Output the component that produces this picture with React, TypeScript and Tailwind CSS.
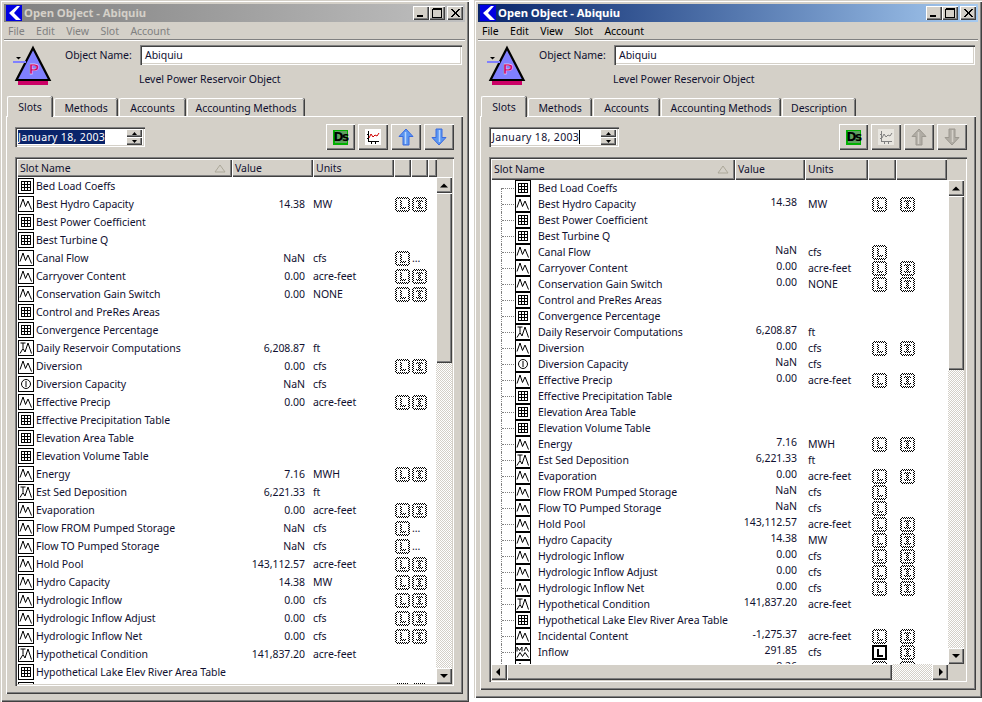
import type { ReactNode } from 'react';

const RAISED =
  'bg-[#d4d0c8] shadow-[inset_1px_1px_0_#ffffff,inset_-1px_-1px_0_#404040,inset_-2px_-2px_0_#808080]';
const SUNKEN =
  'shadow-[inset_1px_1px_0_#808080,inset_2px_2px_0_#404040,inset_-1px_-1px_0_#ffffff,inset_-2px_-2px_0_#d4d0c8]';
const DITHER =
  'bg-[repeating-conic-gradient(#d4d0c8_0_25%,#ffffff_0_50%)] bg-[length:2px_2px]';

type IconKind = 'table' | 'series' | 'peak' | 'multi' | 'scalar';
type Row = [name: string, value?: string, units?: string, kind?: IconKind, flags?: string];

const LEFT_ROWS: Row[] = [
  ['Bed Load Coeffs', '', '', 'table', ''],
  ['Best Hydro Capacity', '14.38', 'MW', 'series', 'LX'],
  ['Best Power Coefficient', '', '', 'table', ''],
  ['Best Turbine Q', '', '', 'table', ''],
  ['Canal Flow', 'NaN', 'cfs', 'series', 'L.'],
  ['Carryover Content', '0.00', 'acre-feet', 'series', 'LX'],
  ['Conservation Gain Switch', '0.00', 'NONE', 'series', 'LX'],
  ['Control and PreRes Areas', '', '', 'table', ''],
  ['Convergence Percentage', '', '', 'table', ''],
  ['Daily Reservoir Computations', '6,208.87', 'ft', 'peak', ''],
  ['Diversion', '0.00', 'cfs', 'series', 'LX'],
  ['Diversion Capacity', 'NaN', 'cfs', 'scalar', ''],
  ['Effective Precip', '0.00', 'acre-feet', 'series', 'LX'],
  ['Effective Precipitation Table', '', '', 'table', ''],
  ['Elevation Area Table', '', '', 'table', ''],
  ['Elevation Volume Table', '', '', 'table', ''],
  ['Energy', '7.16', 'MWH', 'series', 'LX'],
  ['Est Sed Deposition', '6,221.33', 'ft', 'peak', ''],
  ['Evaporation', '0.00', 'acre-feet', 'series', 'LX'],
  ['Flow FROM Pumped Storage', 'NaN', 'cfs', 'series', 'L.'],
  ['Flow TO Pumped Storage', 'NaN', 'cfs', 'series', 'L.'],
  ['Hold Pool', '143,112.57', 'acre-feet', 'series', 'LX'],
  ['Hydro Capacity', '14.38', 'MW', 'series', 'LX'],
  ['Hydrologic Inflow', '0.00', 'cfs', 'series', 'LX'],
  ['Hydrologic Inflow Adjust', '0.00', 'cfs', 'series', 'LX'],
  ['Hydrologic Inflow Net', '0.00', 'cfs', 'series', 'LX'],
  ['Hypothetical Condition', '141,837.20', 'acre-feet', 'peak', ''],
  ['Hypothetical Lake Elev River Area Table', '', '', 'table', ''],
  ['Incidental Content', '-1,275.37', 'acre-feet', 'series', 'LX'],
];

const RIGHT_ROWS: Row[] = [
  ['Bed Load Coeffs', '', '', 'table', ''],
  ['Best Hydro Capacity', '14.38', 'MW', 'series', 'LX'],
  ['Best Power Coefficient', '', '', 'table', ''],
  ['Best Turbine Q', '', '', 'table', ''],
  ['Canal Flow', 'NaN', 'cfs', 'series', 'L'],
  ['Carryover Content', '0.00', 'acre-feet', 'series', 'LX'],
  ['Conservation Gain Switch', '0.00', 'NONE', 'series', 'LX'],
  ['Control and PreRes Areas', '', '', 'table', ''],
  ['Convergence Percentage', '', '', 'table', ''],
  ['Daily Reservoir Computations', '6,208.87', 'ft', 'peak', ''],
  ['Diversion', '0.00', 'cfs', 'series', 'LX'],
  ['Diversion Capacity', 'NaN', 'cfs', 'scalar', ''],
  ['Effective Precip', '0.00', 'acre-feet', 'series', 'LX'],
  ['Effective Precipitation Table', '', '', 'table', ''],
  ['Elevation Area Table', '', '', 'table', ''],
  ['Elevation Volume Table', '', '', 'table', ''],
  ['Energy', '7.16', 'MWH', 'series', 'LX'],
  ['Est Sed Deposition', '6,221.33', 'ft', 'peak', ''],
  ['Evaporation', '0.00', 'acre-feet', 'series', 'LX'],
  ['Flow FROM Pumped Storage', 'NaN', 'cfs', 'series', 'L'],
  ['Flow TO Pumped Storage', 'NaN', 'cfs', 'series', 'L'],
  ['Hold Pool', '143,112.57', 'acre-feet', 'series', 'LX'],
  ['Hydro Capacity', '14.38', 'MW', 'series', 'LX'],
  ['Hydrologic Inflow', '0.00', 'cfs', 'series', 'LX'],
  ['Hydrologic Inflow Adjust', '0.00', 'cfs', 'series', 'LX'],
  ['Hydrologic Inflow Net', '0.00', 'cfs', 'series', 'LX'],
  ['Hypothetical Condition', '141,837.20', 'acre-feet', 'peak', ''],
  ['Hypothetical Lake Elev River Area Table', '', '', 'table', ''],
  ['Incidental Content', '-1,275.37', 'acre-feet', 'series', 'LX'],
  ['Inflow', '291.85', 'cfs', 'multi', 'BX'],
  ['Inflow S', '8.26', '', 'series', 'LX'],
];

function SlotIcon({ kind }: { kind: IconKind }) {
  return (
    <svg width="16" height="16" viewBox="0 0 16 16" shapeRendering="crispEdges" className="shrink-0">
      <rect x="0.5" y="0.5" width="15" height="15" fill="#fff" stroke="#000" strokeWidth="1.4" />
      {kind === 'table' && (
        <path d="M3.500 3.500h9v9h-9zM3.500 6.500h9M3.500 9.500h9M6.500 3.500v9M9.500 3.500v9" fill="none" stroke="#000" />
      )}
      {kind === 'series' && (
        <path d="M2 11.500 L5 3 L7.500 10.500 L10 5 L13.500 13.500" fill="none" stroke="#000" strokeWidth="1" shapeRendering="auto" />
      )}
      {kind === 'peak' && (
        <path d="M2.500 3h5M5 3v5M2 13.500L5 8.500L7 12L10 3L13.500 13.500" fill="none" stroke="#000" strokeWidth="1" shapeRendering="auto" />
      )}
      {kind === 'multi' && (
        <path d="M2 7.500V3L4.500 6.500L7 3V7.500M9 7L11 3L13.500 7.500M2 13.500L5 8.500L7.500 12.500L10 8.500L13.500 13.500" fill="none" stroke="#000" strokeWidth="1" shapeRendering="auto" />
      )}
      {kind === 'scalar' && (
        <g fill="none" stroke="#000" shapeRendering="auto">
          <circle cx="8" cy="8" r="4.5" />
          <path d="M8 5v6" />
        </g>
      )}
    </svg>
  );
}

// checker-dithered frame with a dithered letter inside, as the disabled log flags are drawn
function ditherPath(letter: 'L' | 'X') {
  const cells: string[] = [];
  const on = (x: number, y: number) => {
    const ring = x < 2 || y < 2 || x > 12 || y > 12;
    const corner = (x < 1 || x > 13) && (y < 1 || y > 13);
    const glyph =
      letter === 'L'
        ? (x >= 5 && x <= 6 && y >= 3 && y <= 11) || (y >= 10 && y <= 11 && x >= 5 && x <= 10)
        : (y >= 3 && y <= 4 && x >= 4 && x <= 10) ||
          (y >= 10 && y <= 11 && x >= 4 && x <= 10) ||
          (x >= 6 && x <= 8 && y >= 3 && y <= 11);
    return (ring && !corner) || glyph;
  };
  for (let y = 0; y < 15; y++) {
    for (let x = 0; x < 15; x++) {
      if ((x + y) % 2 === 0 && on(x, y)) cells.push(`M${x} ${y}h1v1h-1z`);
    }
  }
  return cells.join('');
}

function Flag({ letter }: { letter: 'L' | 'X' }) {
  return (
    <svg width="15" height="15" viewBox="0 0 15 15" shapeRendering="crispEdges" className="shrink-0">
      <path d={ditherPath(letter)} fill="#000" />
    </svg>
  );
}

function BoldFlag() {
  return (
    <svg width="15" height="15" viewBox="0 0 15 15" shapeRendering="crispEdges" className="shrink-0">
      <rect x="1" y="1" width="13" height="13" fill="#fff" stroke="#000" strokeWidth="2" />
      <path d="M5 3.500h2v6h4v2H5z" fill="#000" />
    </svg>
  );
}

function ObjectIcon() {
  return (
    <svg width="44" height="46" viewBox="0 0 44 46" className="shrink-0">
      <rect x="6" y="38" width="30" height="5" fill="#cc0066" />
      <path d="M21 6 L37.500 38 H4.500 Z" fill="#8080ff" stroke="#000" strokeWidth="2.2" strokeLinejoin="miter" />
      <rect x="1" y="19" width="13" height="2" fill="#8080ff" />
      <path d="M4 15h5l-2.500 2.500z" fill="#000" />
      <text x="22" y="32" textAnchor="middle" fontSize="15" fontWeight="700" fill="#cc0066" stroke="#fff" strokeWidth="0.3" fontFamily="Liberation Sans, sans-serif">
        P
      </text>
    </svg>
  );
}

function AppLogo() {
  return (
    <svg width="16" height="16" viewBox="0 0 16 16" className="shrink-0" shapeRendering="crispEdges">
      <rect width="16" height="16" fill="#0000e0" />
      <path d="M11 1 L14 1 L8 8 L15 15 L10 15 L3 8 Z" fill="#fff" shapeRendering="auto" />
    </svg>
  );
}

function CaptionButton({ glyph, gap }: { glyph: 'min' | 'max' | 'close'; gap?: boolean }) {
  return (
    <div className={`flex h-[14px] w-[16px] items-center justify-center ${RAISED} ${gap ? 'ml-[2px]' : ''}`}>
      <svg width="12" height="10" viewBox="0 0 12 10" shapeRendering="crispEdges">
        {glyph === 'min' && <rect x="2" y="7" width="6" height="2" fill="#000" />}
        {glyph === 'max' && <path d="M1.500 1.500h9v8h-9zM1.500 0.500h9" fill="none" stroke="#000" />}
        {glyph === 'close' && (
          <path d="M2 1L10 9M3 1L11 9M10 1L2 9M11 1L3 9" stroke="#000" shapeRendering="auto" />
        )}
      </svg>
    </div>
  );
}

function Tab({ label, width, active }: { label: string; width: number; active?: boolean }) {
  return (
    <div
      style={{ width }}
      className={`flex shrink-0 items-center justify-center rounded-t-[2px] border-t border-l border-white bg-[#d4d0c8] shadow-[inset_-1px_0_0_#808080,1px_0_0_#404040] ${
        active ? 'relative z-10 mr-[2px] -mb-px h-[21px] pt-[1px]' : 'mr-[2px] mt-[2px] h-[18px] pt-[2px]'
      }`}
    >
      {label}
    </div>
  );
}

function DsGlyph() {
  return (
    <div className="flex h-[15px] w-[15px] items-center justify-center bg-[#00b000]">
      <div className="flex h-[12px] w-[12px] items-center justify-center bg-[#60a060] font-['DejaVu_Sans',sans-serif] text-[12px] font-bold leading-none tracking-[-1.5px] text-black">
        Ds
      </div>
    </div>
  );
}

function ChartGlyph({ disabled }: { disabled?: boolean }) {
  const ink = disabled ? '#808080' : '#000';
  return (
    <svg width="16" height="16" viewBox="0 0 16 16" shapeRendering="crispEdges">
      <rect width="16" height="16" fill={disabled ? '#e8e6e0' : '#fff'} />
      <path d="M3.500 2v10.500H14M2 5h1.500M2 9h1.500M6.500 13v1.500M10.500 13v1.500" stroke={ink} fill="none" />
      <path d="M4 9L6 5L8 8L10 6L12 7L14 4" stroke={disabled ? '#808080' : '#d00000'} fill="none" shapeRendering="auto" />
    </svg>
  );
}

function ArrowGlyph({ down, disabled }: { down?: boolean; disabled?: boolean }) {
  const fill = disabled ? '#b0aca4' : '#5a96f0';
  const edge = disabled ? '#9c9890' : '#3a6ae0';
  return (
    <svg width="16" height="18" viewBox="0 0 16 18" className={down ? 'rotate-180' : ''}>
      <path d="M8 1 L15 8.500 H11 V17 H5 V8.500 H1 Z" fill={fill} stroke={edge} strokeWidth="1" />
      <path d="M7.500 4 L7.500 16" stroke={disabled ? '#d4d0c8' : '#b8d4ff'} strokeWidth="1.500" />
    </svg>
  );
}

function ToolButton({ children, width }: { children: ReactNode; width: number }) {
  return (
    <div style={{ width }} className={`flex h-[26px] shrink-0 items-center justify-center ${RAISED}`}>
      {children}
    </div>
  );
}

function Arrow({ dir }: { dir: 'up' | 'down' | 'left' | 'right' }) {
  const d = {
    up: 'M4 2.500L0 6.500h8z',
    down: 'M0 2h8L4 6z',
    left: 'M5 0v8L1 4z',
    right: 'M3 0v8L7 4z',
  }[dir];
  return (
    <svg width="8" height="8" viewBox="0 0 8 8">
      <path d={d} fill="#000" />
    </svg>
  );
}

function ScrollButton({ dir }: { dir: 'up' | 'down' | 'left' | 'right' }) {
  return (
    <div className={`flex h-[16px] w-[16px] shrink-0 items-center justify-center ${RAISED}`}>
      <Arrow dir={dir} />
    </div>
  );
}

function VScroll({ thumb, bottomGap, right }: { thumb: number; bottomGap?: number; right?: number }) {
  return (
    <div className="flex w-[16px] shrink-0 flex-col" style={{ paddingBottom: bottomGap, marginRight: right }}>
      <ScrollButton dir="up" />
      <div style={{ height: thumb }} className={`shrink-0 ${RAISED}`} />
      <div className={`min-h-0 flex-1 ${DITHER}`} />
      <ScrollButton dir="down" />
    </div>
  );
}

function HeadCell({ children, width, sort }: { children?: ReactNode; width: number; sort?: boolean }) {
  return (
    <div style={{ width }} className={`flex shrink-0 items-center justify-between px-[3px] ${RAISED}`}>
      <span>{children}</span>
      {sort && (
        <svg width="12" height="9" viewBox="0 0 12 9" className="mr-[3px]">
          <path d="M6 1L11 8H1Z" fill="none" stroke="#aca899" />
        </svg>
      )}
    </div>
  );
}

function LeftWindowBody() {
  return (
    <div className="flex min-h-0 flex-1 flex-col">
      <div className="flex h-[18px] shrink-0 pr-[16px] leading-[18px]">
        <HeadCell width={215} sort>
          Slot Name
        </HeadCell>
        <HeadCell width={81}>Value</HeadCell>
        <HeadCell width={81}>Units</HeadCell>
        <HeadCell width={17} />
        <HeadCell width={17} />
        <HeadCell width={9} />
      </div>
      <div className="flex min-h-0 flex-1">
        <div className="min-h-0 min-w-0 flex-1 overflow-hidden bg-white">
          {LEFT_ROWS.map(([name, value, units, kind, flags]) => (
            <div key={name} className="flex h-[18px] items-center">
              <div className="ml-[1px] w-[18px] shrink-0">
                <SlotIcon kind={kind ?? 'table'} />
              </div>
              <div className="w-[196px] shrink-0 whitespace-nowrap pt-[2px]">{name}</div>
              <div className="w-[81px] shrink-0 pr-[8px] pt-[2px] text-right">{value}</div>
              <div className="w-[82px] shrink-0 pt-[2px]">{units}</div>
              <div className="flex w-[40px] shrink-0 items-center gap-[2px]">
                {flags?.includes('L') && <Flag letter="L" />}
                {flags?.includes('X') && <Flag letter="X" />}
                {flags?.includes('.') && <span className="leading-none">...</span>}
              </div>
            </div>
          ))}
        </div>
        <VScroll thumb={170} />
      </div>
    </div>
  );
}

function RightWindowBody() {
  return (
    <div className="flex min-h-0 flex-1 flex-col">
      <div className="flex h-[21px] shrink-0 pr-[17px] leading-[21px]">
        <HeadCell width={244} sort>
          Slot Name
        </HeadCell>
        <HeadCell width={70}>Value</HeadCell>
        <HeadCell width={63}>Units</HeadCell>
        <HeadCell width={28} />
        <HeadCell width={51} />
      </div>
      <div className="flex min-h-0 flex-1">
        <div className="flex min-h-0 min-w-0 flex-1 flex-col">
          <div className="relative min-h-0 flex-1 overflow-hidden bg-white">
            {RIGHT_ROWS.map(([name, value, units, kind, flags], i) => (
              <div key={name} className="flex h-[16px] items-center">
                <div className="relative h-[16px] w-[24px] shrink-0">
                  <div className={`absolute left-[10px] w-0 border-l border-dotted border-[#808080] ${i === 0 ? 'top-[8px] h-[8px]' : 'top-0 h-[16px]'}`} />
                  <div className="absolute left-[11px] top-[8px] w-[12px] border-t border-dotted border-[#808080]" />
                </div>
                <SlotIcon kind={kind ?? 'table'} />
                <div className="ml-[7px] w-[197px] shrink-0 whitespace-nowrap pt-[2px]">{name}</div>
                <div className="-mt-[2px] w-[70px] shrink-0 pr-[8px] text-right">{value}</div>
                <div className="w-[63px] shrink-0 pl-[3px] pt-[2px]">{units}</div>
                <div className="flex w-[80px] shrink-0 items-center pl-[4px]">
                  <div className="w-[28px]">
                    {flags?.includes('L') && <Flag letter="L" />}
                    {flags?.includes('B') && <BoldFlag />}
                  </div>
                  {flags?.includes('X') && <Flag letter="X" />}
                </div>
              </div>
            ))}
          </div>
          <div className="flex h-[16px] shrink-0">
            <ScrollButton dir="left" />
            <div className={`w-[385px] shrink-0 ${RAISED}`} />
            <div className={`min-w-0 flex-1 ${DITHER}`} />
            <ScrollButton dir="right" />
          </div>
        </div>
        <VScroll thumb={174} bottomGap={16} right={1} />
      </div>
    </div>
  );
}

function ObjectWindow({
  active,
  width,
  height,
  tabs,
  children,
}: {
  active?: boolean;
  width: number;
  height: number;
  tabs: [string, number][];
  children: ReactNode;
}) {
  return (
    <div
      style={{ width, height }}
      className="flex shrink-0 flex-col bg-[#d4d0c8] p-[4px] shadow-[inset_1px_1px_0_#d4d0c8,inset_2px_2px_0_#ffffff,inset_-1px_-1px_0_#404040,inset_-2px_-2px_0_#808080]"
    >
      <div
        className={`flex h-[18px] shrink-0 items-center px-[2px] text-[11.3px] font-bold ${
          active
            ? 'bg-gradient-to-r from-[#0a246a] to-[#a6caf0] text-white'
            : 'bg-gradient-to-r from-[#808080] to-[#c0c0c0] text-[#d4d0c8]'
        }`}
      >
        <AppLogo />
        <span className="ml-[2px] flex-1">Open Object - Abiquiu</span>
        <CaptionButton glyph="min" />
        <CaptionButton glyph="max" />
        <CaptionButton glyph="close" gap />
      </div>

      <div
        className={`flex h-[18px] shrink-0 items-center gap-[11.5px] border-b border-[#808080] pl-[4px] pt-[2px] shadow-[0_1px_0_#ffffff] ${
          active ? 'text-black' : 'text-[#808080]'
        }`}
      >
        <span>File</span>
        <span>Edit</span>
        <span>View</span>
        <span>Slot</span>
        <span>Account</span>
      </div>

      <div className="flex h-[56px] shrink-0 pl-[8px] pt-[2px]">
        <ObjectIcon />
        <div className="ml-[9px] min-w-0 flex-1 pt-[3px]">
          <div className="mr-[3px] flex h-[20px] items-center">
            <span className="w-[75px] shrink-0 pt-[2px]">Object Name:</span>
            <div className={`flex h-[20px] flex-1 items-center bg-white pl-[5px] pt-[2px] ${SUNKEN}`}>Abiquiu</div>
          </div>
          <div className="ml-[74px] mt-[7px]">Level Power Reservoir Object</div>
        </div>
      </div>

      <div className="flex h-[20px] shrink-0 items-start pl-[3px]">
        {tabs.map(([label, w], i) => (
          <Tab key={label} label={label} width={w} active={i === 0} />
        ))}
      </div>

      <div className="mx-[2px] mb-[4px] flex min-h-0 flex-1 flex-col bg-[#d4d0c8] px-[9px] py-[8px] shadow-[inset_1px_1px_0_#ffffff,inset_-1px_-1px_0_#404040,inset_-2px_-2px_0_#808080]">
        <div className="flex h-[26px] shrink-0 items-center justify-between">
          <div className={`flex h-[20px] w-[130px] items-center bg-white px-[3px] ${SUNKEN}`}>
            <div className="min-w-0 flex-1 whitespace-nowrap pt-[2px] tracking-[0.35px]">
              {active ? (
                <span className="border-r border-black">January 18, 2003</span>
              ) : (
                <span className="bg-[#0a246a] text-white">January 18, 2003</span>
              )}
            </div>
            <div className="flex shrink-0 flex-col">
              <div className={`flex h-[8px] w-[16px] items-center justify-center ${RAISED}`}>
                <svg width="5" height="3" viewBox="0 0 5 3">
                  <path d="M2.500 0L5 3H0z" />
                </svg>
              </div>
              <div className={`flex h-[8px] w-[16px] items-center justify-center ${RAISED}`}>
                <svg width="5" height="3" viewBox="0 0 5 3">
                  <path d="M0 0h5L2.500 3z" />
                </svg>
              </div>
            </div>
          </div>
          <div className="flex gap-[3px]">
            <ToolButton width={29}>
              <DsGlyph />
            </ToolButton>
            <ToolButton width={30}>
              <ChartGlyph disabled={active} />
            </ToolButton>
            <ToolButton width={30}>
              <ArrowGlyph disabled={active} />
            </ToolButton>
            <ToolButton width={30}>
              <ArrowGlyph down disabled={active} />
            </ToolButton>
          </div>
        </div>

        <div className={`mt-[7px] flex min-h-0 flex-1 flex-col overflow-hidden p-[2px] ${SUNKEN}`}>{children}</div>
      </div>
    </div>
  );
}

export default function App() {
  return (
    <div className="flex h-[702px] w-[982px] items-start gap-[5px] overflow-hidden bg-white font-['Noto_Sans',sans-serif] text-[10.5px] tracking-[-0.05px] text-[#101030]">
      <ObjectWindow
        width={469}
        height={702}
        tabs={[
          ['Slots', 45],
          ['Methods', 63],
          ['Accounts', 66],
          ['Accounting Methods', 117],
        ]}
      >
        <LeftWindowBody />
      </ObjectWindow>
      <ObjectWindow
        active
        width={508}
        height={698}
        tabs={[
          ['Slots', 45],
          ['Methods', 63],
          ['Accounts', 66],
          ['Accounting Methods', 119],
          ['Description', 73],
        ]}
      >
        <RightWindowBody />
      </ObjectWindow>
    </div>
  );
}
